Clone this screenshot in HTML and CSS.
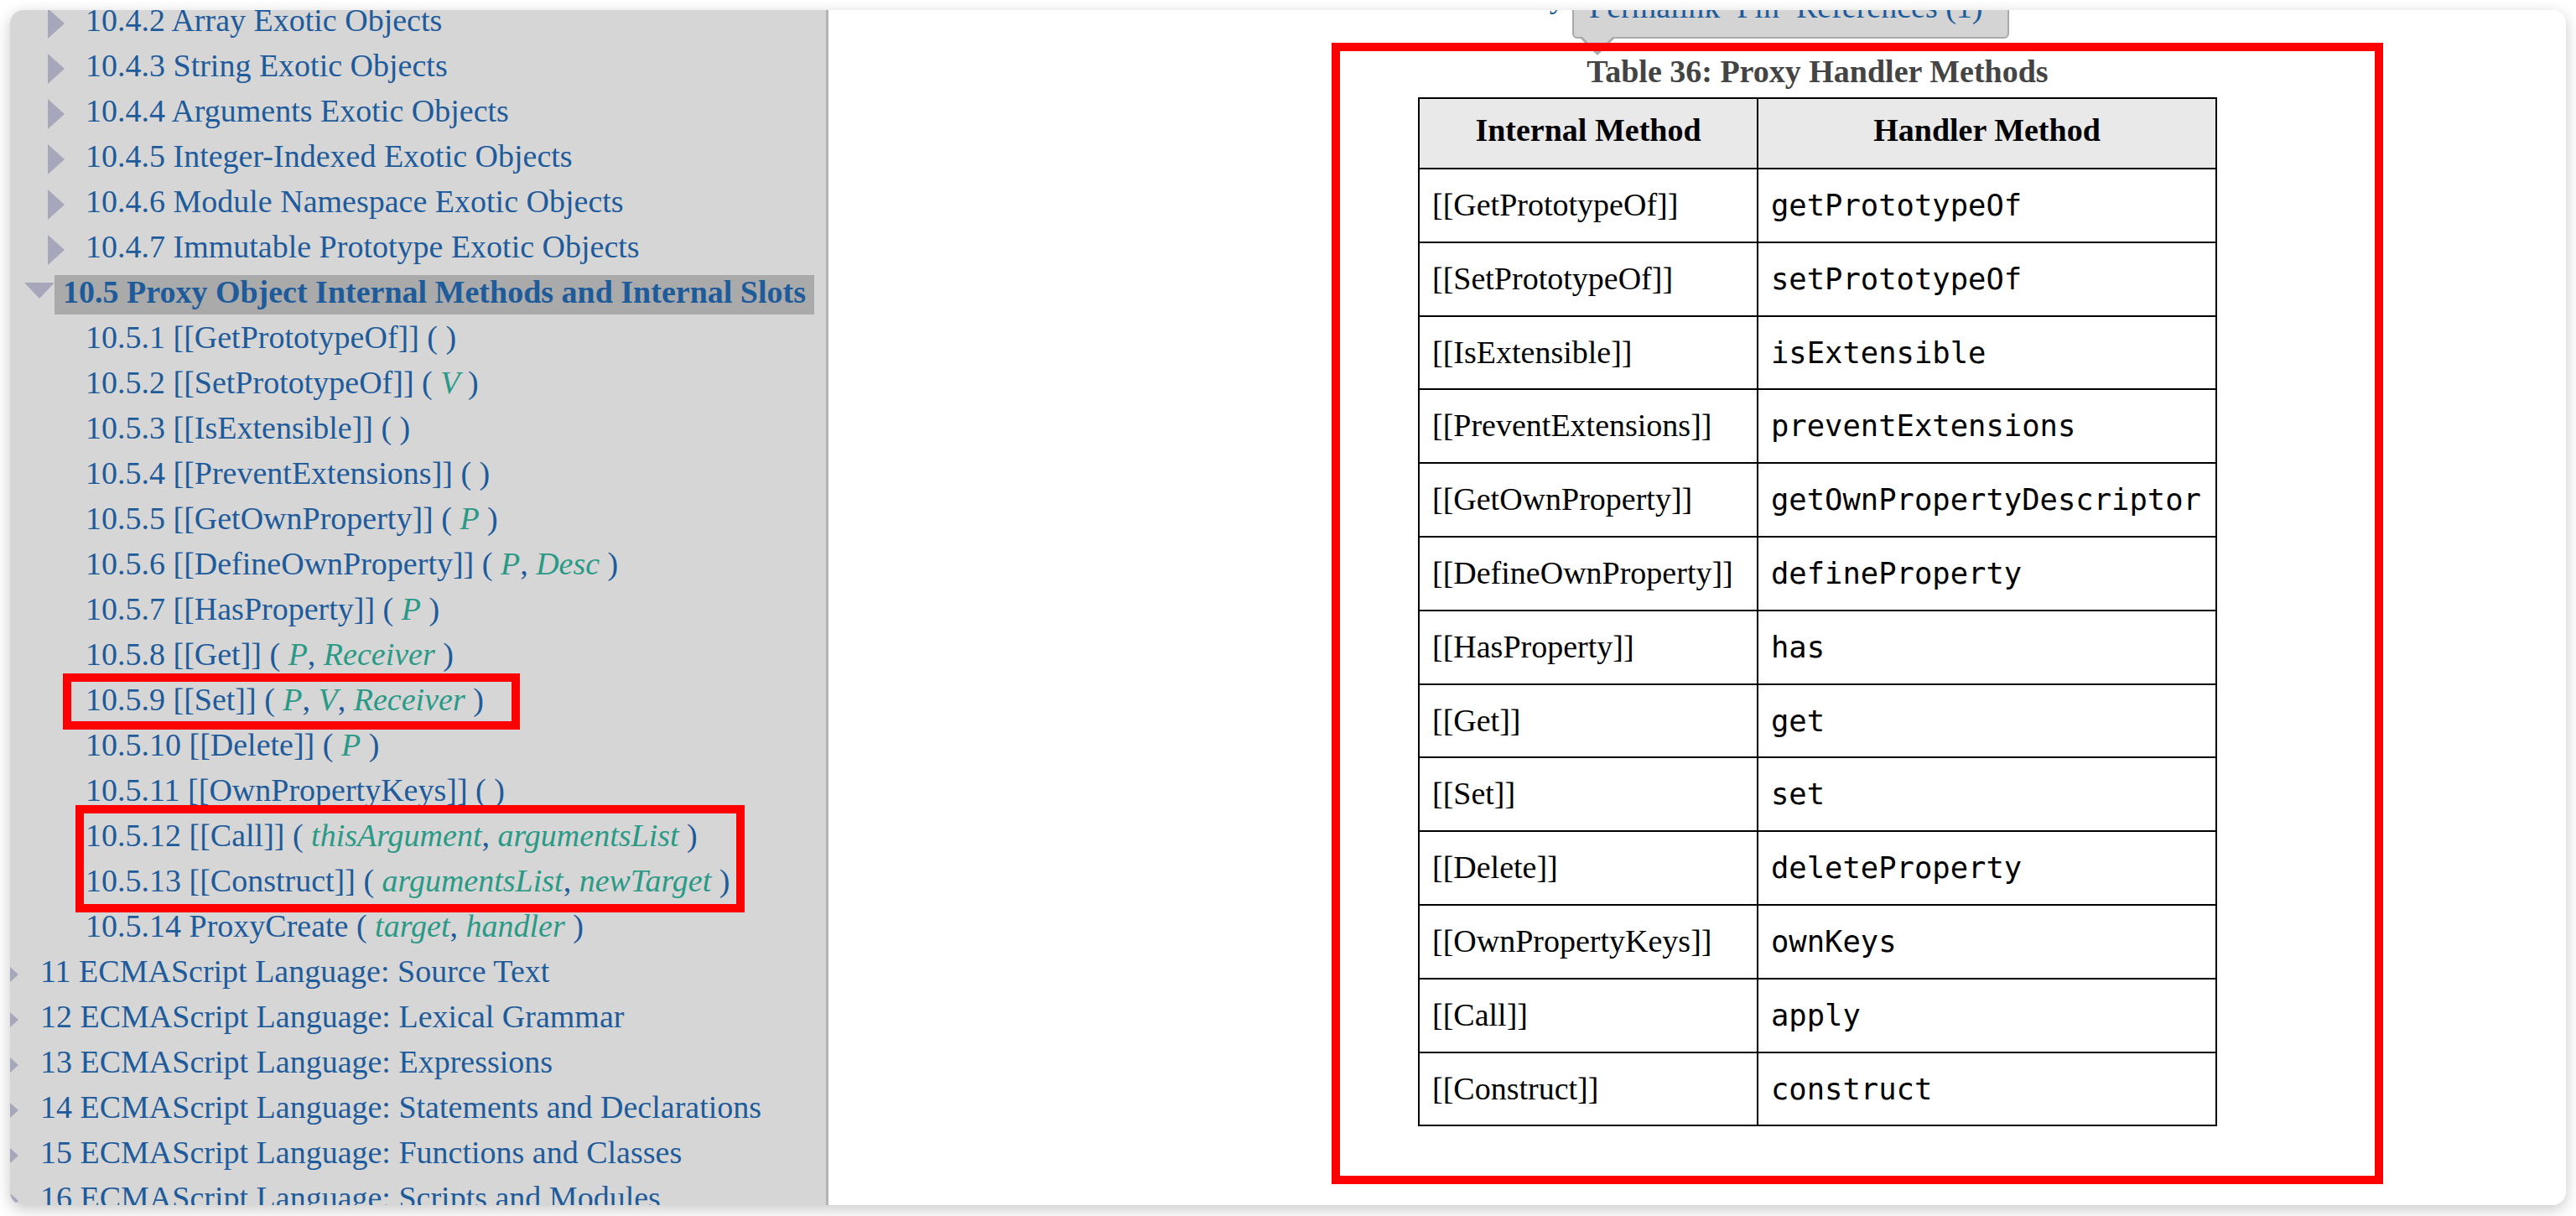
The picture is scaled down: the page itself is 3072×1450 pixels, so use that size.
FILE: index.html
```html
<!DOCTYPE html>
<html lang="en">
<head>
<meta charset="utf-8">
<title>10.5 Proxy Object Internal Methods and Internal Slots</title>
<link rel="stylesheet" href="styles.css">
</head>
<body>
<div class="shot">
  <div class="window">
    <nav class="menu">
      <ol class="toc">
        <li class="l3"><span class="toggle"><svg class="tri" width="20" height="36" viewBox="0 0 20 36"><polygon points="0,0 20,18 0,36"/></svg></span><a href="#">10.4.2 Array Exotic Objects</a></li>
        <li class="l3"><span class="toggle"><svg class="tri" width="20" height="36" viewBox="0 0 20 36"><polygon points="0,0 20,18 0,36"/></svg></span><a href="#">10.4.3 String Exotic Objects</a></li>
        <li class="l3"><span class="toggle"><svg class="tri" width="20" height="36" viewBox="0 0 20 36"><polygon points="0,0 20,18 0,36"/></svg></span><a href="#">10.4.4 Arguments Exotic Objects</a></li>
        <li class="l3"><span class="toggle"><svg class="tri" width="20" height="36" viewBox="0 0 20 36"><polygon points="0,0 20,18 0,36"/></svg></span><a href="#">10.4.5 Integer-Indexed Exotic Objects</a></li>
        <li class="l3"><span class="toggle"><svg class="tri" width="20" height="36" viewBox="0 0 20 36"><polygon points="0,0 20,18 0,36"/></svg></span><a href="#">10.4.6 Module Namespace Exotic Objects</a></li>
        <li class="l3"><span class="toggle"><svg class="tri" width="20" height="36" viewBox="0 0 20 36"><polygon points="0,0 20,18 0,36"/></svg></span><a href="#">10.4.7 Immutable Prototype Exotic Objects</a></li>
        <li class="l2 active"><span class="toggle"><svg class="tri down" width="36" height="19" viewBox="0 0 36 19"><polygon points="0,0 36,0 18,19"/></svg></span><a href="#">10.5 Proxy Object Internal Methods and Internal Slots</a></li>
        <li class="l3"><span class="toggle"></span><a href="#">10.5.1 [[GetPrototypeOf]] ( )</a></li>
        <li class="l3"><span class="toggle"></span><a href="#">10.5.2 [[SetPrototypeOf]] ( <var>V</var> )</a></li>
        <li class="l3"><span class="toggle"></span><a href="#">10.5.3 [[IsExtensible]] ( )</a></li>
        <li class="l3"><span class="toggle"></span><a href="#">10.5.4 [[PreventExtensions]] ( )</a></li>
        <li class="l3"><span class="toggle"></span><a href="#">10.5.5 [[GetOwnProperty]] ( <var>P</var> )</a></li>
        <li class="l3"><span class="toggle"></span><a href="#">10.5.6 [[DefineOwnProperty]] ( <var>P</var>, <var>Desc</var> )</a></li>
        <li class="l3"><span class="toggle"></span><a href="#">10.5.7 [[HasProperty]] ( <var>P</var> )</a></li>
        <li class="l3"><span class="toggle"></span><a href="#">10.5.8 [[Get]] ( <var>P</var>, <var>Receiver</var> )</a></li>
        <li class="l3"><span class="toggle"></span><a href="#">10.5.9 [[Set]] ( <var>P</var>, <var>V</var>, <var>Receiver</var> )</a></li>
        <li class="l3"><span class="toggle"></span><a href="#">10.5.10 [[Delete]] ( <var>P</var> )</a></li>
        <li class="l3"><span class="toggle"></span><a href="#">10.5.11 [[OwnPropertyKeys]] ( )</a></li>
        <li class="l3"><span class="toggle"></span><a href="#">10.5.12 [[Call]] ( <var>thisArgument</var>, <var>argumentsList</var> )</a></li>
        <li class="l3"><span class="toggle"></span><a href="#">10.5.13 [[Construct]] ( <var>argumentsList</var>, <var>newTarget</var> )</a></li>
        <li class="l3"><span class="toggle"></span><a href="#">10.5.14 ProxyCreate ( <var>target</var>, <var>handler</var> )</a></li>
        <li class="l1"><span class="toggle"><svg class="tri" width="20" height="36" viewBox="0 0 20 36"><polygon points="0,0 20,18 0,36"/></svg></span><a href="#">11 ECMAScript Language: Source Text</a></li>
        <li class="l1"><span class="toggle"><svg class="tri" width="20" height="36" viewBox="0 0 20 36"><polygon points="0,0 20,18 0,36"/></svg></span><a href="#">12 ECMAScript Language: Lexical Grammar</a></li>
        <li class="l1"><span class="toggle"><svg class="tri" width="20" height="36" viewBox="0 0 20 36"><polygon points="0,0 20,18 0,36"/></svg></span><a href="#">13 ECMAScript Language: Expressions</a></li>
        <li class="l1"><span class="toggle"><svg class="tri" width="20" height="36" viewBox="0 0 20 36"><polygon points="0,0 20,18 0,36"/></svg></span><a href="#">14 ECMAScript Language: Statements and Declarations</a></li>
        <li class="l1"><span class="toggle"><svg class="tri" width="20" height="36" viewBox="0 0 20 36"><polygon points="0,0 20,18 0,36"/></svg></span><a href="#">15 ECMAScript Language: Functions and Classes</a></li>
        <li class="l1"><span class="toggle"><svg class="tri" width="20" height="36" viewBox="0 0 20 36"><polygon points="0,0 20,18 0,36"/></svg></span><a href="#">16 ECMAScript Language: Scripts and Modules</a></li>
      </ol>
    </nav>
    <main class="content">
      <div class="above"><a href="#">Proxy</a></div>
      <div class="toolbox"><a href="#">Permalink</a><a href="#">Pin</a><a href="#">References (1)</a></div>
      <figure class="fig">
        <figcaption>Table 36: Proxy Handler Methods</figcaption>
        <table>
          <colgroup><col class="c1"><col class="c2"></colgroup>
          <thead>
            <tr><th>Internal Method</th><th>Handler Method</th></tr>
          </thead>
          <tbody>
            <tr><td>[[GetPrototypeOf]]</td><td><code>getPrototypeOf</code></td></tr>
            <tr><td>[[SetPrototypeOf]]</td><td><code>setPrototypeOf</code></td></tr>
            <tr><td>[[IsExtensible]]</td><td><code>isExtensible</code></td></tr>
            <tr><td>[[PreventExtensions]]</td><td><code>preventExtensions</code></td></tr>
            <tr><td>[[GetOwnProperty]]</td><td><code>getOwnPropertyDescriptor</code></td></tr>
            <tr><td>[[DefineOwnProperty]]</td><td><code>defineProperty</code></td></tr>
            <tr><td>[[HasProperty]]</td><td><code>has</code></td></tr>
            <tr><td>[[Get]]</td><td><code>get</code></td></tr>
            <tr><td>[[Set]]</td><td><code>set</code></td></tr>
            <tr><td>[[Delete]]</td><td><code>deleteProperty</code></td></tr>
            <tr><td>[[OwnPropertyKeys]]</td><td><code>ownKeys</code></td></tr>
            <tr><td>[[Call]]</td><td><code>apply</code></td></tr>
            <tr><td>[[Construct]]</td><td><code>construct</code></td></tr>
          </tbody>
        </table>
      </figure>
    </main>
  </div>
  <div class="mark mark-set"></div>
  <div class="mark mark-call"></div>
  <div class="mark mark-table"></div>
</div>
</body>
</html>
```

FILE: styles.css
```css
html, body {
  margin: 0;
  padding: 0;
  background: #ffffff;
}

body {
  font-family: "Liberation Serif", "Times New Roman", serif;
  font-size: 38px;
}

a {
  color: #1e5b9b;
  text-decoration: none;
}

var {
  color: #2a9a86;
  font-style: italic;
}

.shot {
  position: relative;
  width: 3072px;
  height: 1450px;
  padding: 12px;
  box-sizing: border-box;
  overflow: hidden;
}

.window {
  display: flex;
  width: 3048px;
  height: 1425px;
  border-radius: 16px;
  overflow: hidden;
  background: #ffffff;
  box-shadow: 0 5px 18px rgba(0, 0, 0, 0.22);
}

/* ---------- sidebar ---------- */
.menu {
  flex: none;
  width: 973px;
  background: #d6d6d6;
  border-right: 3px solid #b4b4b4;
  overflow: hidden;
}

.toc {
  list-style: none;
  margin: -14px 0 0;
  padding: 0;
}

.toc li {
  display: flex;
  align-items: flex-start;
  height: 54px;
  white-space: nowrap;
}

.toggle {
  flex: none;
  width: 44px;
  box-sizing: border-box;
  padding-left: 9px;
}

.l1 .toggle {
  margin-left: -18px;
  padding-left: 8px;
}

.l2 .toggle {
  margin-left: 9px;
  padding-left: 8px;
}

.l3 .toggle {
  margin-left: 36px;
}

.tri {
  display: block;
  margin-top: 12px;
  fill: #a7a7bc;
}

.tri.down {
  margin-top: 15px;
}

.toc a {
  display: block;
  margin-top: 6px;
  padding: 0 10px 7px;
  line-height: 40px;
}

.toc li.active > a {
  background: #aaaaaa;
  font-weight: bold;
}

/* ---------- content ---------- */
.content {
  flex: 1;
  position: relative;
  background: #ffffff;
}

.above {
  margin-top: -39px;
  padding-left: 788px;
  line-height: 46px;
}

.toolbox {
  position: absolute;
  left: 887px;
  top: -40px;
  width: 521px;
  height: 74px;
  box-sizing: border-box;
  display: flex;
  gap: 20px;
  padding: 11px 18px 0;
  line-height: 46px;
  background: #d4d4d4;
  border: 2px solid #a9a9a9;
  border-radius: 6px;
  white-space: nowrap;
}

.toolbox::before {
  content: "";
  position: absolute;
  left: 6px;
  top: 100%;
  border: 22px solid transparent;
  border-top-color: #a9a9a9;
  border-bottom: 0;
}

.toolbox::after {
  content: "";
  position: absolute;
  left: 9px;
  top: 100%;
  margin-top: -1px;
  border: 19px solid transparent;
  border-top-color: #d4d4d4;
  border-bottom: 0;
}

.fig {
  margin: 0 0 0 703px;
  width: 953px;
}

.fig figcaption {
  margin: 43px 0 8px;
  line-height: 46px;
  text-align: center;
  font-weight: bold;
  color: #444444;
}

.fig table {
  width: 953px;
  border-collapse: collapse;
  table-layout: fixed;
  font-size: 38px;
}

.fig col.c1 {
  width: 404px;
}

.fig th,
.fig td {
  border: 2px solid #000000;
  padding: 0 15px;
  text-align: left;
  white-space: nowrap;
  color: #000000;
}

.fig th {
  background: #e9e9e9;
  font-weight: bold;
  text-align: center;
  line-height: 74px;
  padding-bottom: 8px;
}

.fig td {
  line-height: 85.8px;
  vertical-align: top;
}

code {
  font-family: "DejaVu Sans Mono", "Liberation Mono", monospace;
  font-size: 35.5px;
}

/* ---------- red annotation boxes ---------- */
.mark {
  position: absolute;
  z-index: 5;
  box-sizing: border-box;
  border: 10px solid #ff0000;
}

.mark-set {
  left: 75px;
  top: 803px;
  width: 545px;
  height: 67px;
}

.mark-call {
  left: 90px;
  top: 960px;
  width: 798px;
  height: 128px;
}

.mark-table {
  left: 1588px;
  top: 51px;
  width: 1254px;
  height: 1361px;
}
```
